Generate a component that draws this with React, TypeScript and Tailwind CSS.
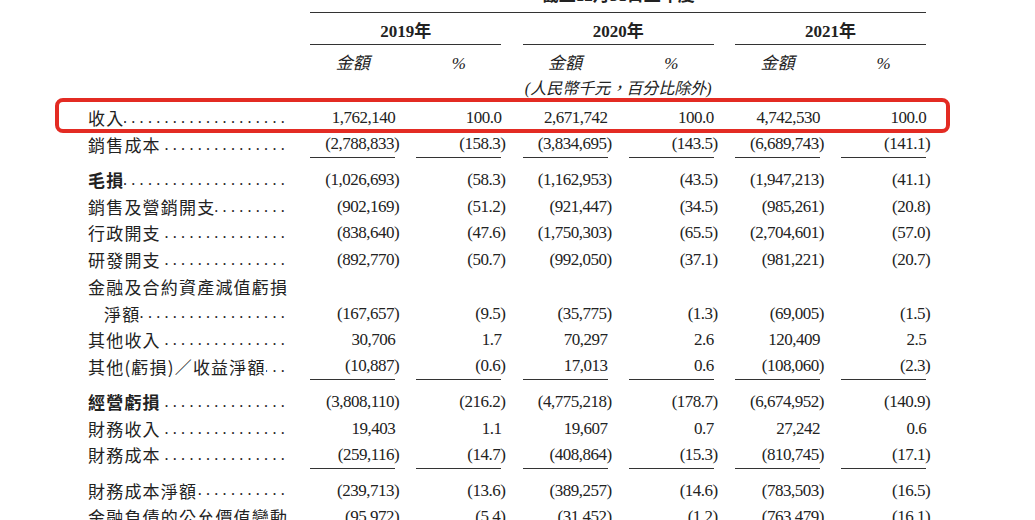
import React from 'react';

type Row = {
  label: string;
  values?: string[];
  bold?: boolean;
  indent?: boolean;
  dots?: boolean;
  rule?: boolean;
};

const rows: Row[] = [
  { label: '收入', values: ['1,762,140', '100.0', '2,671,742', '100.0', '4,742,530', '100.0'], dots: true },
  { label: '銷售成本', values: ['(2,788,833)', '(158.3)', '(3,834,695)', '(143.5)', '(6,689,743)', '(141.1)'], dots: true, rule: true },
  { label: '毛損', values: ['(1,026,693)', '(58.3)', '(1,162,953)', '(43.5)', '(1,947,213)', '(41.1)'], dots: true, bold: true },
  { label: '銷售及營銷開支', values: ['(902,169)', '(51.2)', '(921,447)', '(34.5)', '(985,261)', '(20.8)'], dots: true },
  { label: '行政開支', values: ['(838,640)', '(47.6)', '(1,750,303)', '(65.5)', '(2,704,601)', '(57.0)'], dots: true },
  { label: '研發開支', values: ['(892,770)', '(50.7)', '(992,050)', '(37.1)', '(981,221)', '(20.7)'], dots: true },
  { label: '金融及合約資產減值虧損' },
  { label: '淨額', values: ['(167,657)', '(9.5)', '(35,775)', '(1.3)', '(69,005)', '(1.5)'], dots: true, indent: true },
  { label: '其他收入', values: ['30,706', '1.7', '70,297', '2.6', '120,409', '2.5'], dots: true },
  { label: '其他(虧損)／收益淨額', values: ['(10,887)', '(0.6)', '17,013', '0.6', '(108,060)', '(2.3)'], dots: true, rule: true },
  { label: '經營虧損', values: ['(3,808,110)', '(216.2)', '(4,775,218)', '(178.7)', '(6,674,952)', '(140.9)'], dots: true, bold: true },
  { label: '財務收入', values: ['19,403', '1.1', '19,607', '0.7', '27,242', '0.6'], dots: true },
  { label: '財務成本', values: ['(259,116)', '(14.7)', '(408,864)', '(15.3)', '(810,745)', '(17.1)'], dots: true, rule: true },
  { label: '財務成本淨額', values: ['(239,713)', '(13.6)', '(389,257)', '(14.6)', '(783,503)', '(16.5)'], dots: true },
  { label: '金融負債的公允價值變動', values: ['(95,972)', '(5.4)', '(31,452)', '(1.2)', '(763,479)', '(16.1)'] },
];

const grid = 'grid grid-cols-[201px_85px_85px_85px_85px_85px_85px] gap-x-[21.2px]';
const serif = "font-['Liberation_Serif','Noto_Sans_CJK_TC',serif]";
const cjk = "font-['Noto_Sans_CJK_TC','Liberation_Serif',sans-serif]";

const Cell = ({ v, rule }: { v: string; rule?: boolean }) => {
  const paren = v.endsWith(')');
  return (
    <div className={`h-full flex items-center justify-end ${rule ? 'border-b border-[#333]' : ''}`}>
      <span className={paren ? '-mr-[4px]' : ''}>{v}</span>
    </div>
  );
};

const Label = ({ row }: { row: Row }) => (
  <div className={`flex items-center min-w-0 ${row.indent ? 'pl-[16px]' : ''}`}>
    <span className={`${cjk} shrink-0 whitespace-nowrap text-[17px] tracking-[1.2px] ${row.bold ? 'font-bold' : ''}`}>
      {row.label}
    </span>
    {row.dots && (
      <span className="flex-1 min-w-0 flex justify-end overflow-hidden">
        <span className={`${serif} shrink-0 whitespace-nowrap text-[16px] tracking-[4.3px]`}>{'.'.repeat(22)}</span>
      </span>
    )}
  </div>
);

export default function App() {
  return (
    <div className="relative w-[1035px] h-[520px] overflow-hidden bg-white text-[#222] text-[17px]">
      <div className="pl-[88px]">
        <div className={grid}>
          <div className={`${serif} col-start-2 col-span-6 -mt-[14px] leading-[20px] font-bold text-center`}>
            截至12月31日止年度
          </div>
          <div className="col-start-2 col-span-6 mt-[6px] h-px bg-[#333]" />
        </div>

        <div className={grid}>
          {['2019年', '2020年', '2021年'].map((y, i) => (
            <div
              key={y}
              className={`${serif} ${i === 0 ? 'col-start-2' : i === 1 ? 'col-start-4' : 'col-start-6'} col-span-2 pt-[9px] pb-[2px] leading-[20px] border-b border-[#333] text-center font-bold`}
            >
              {y}
            </div>
          ))}
        </div>

        <div className={`${grid} ${serif} italic`}>
          {['金額', '%', '金額', '%', '金額', '%'].map((h, i) => (
            <div key={i} className={`${i === 0 ? 'col-start-2' : ''} pt-[9px] leading-[20px] text-center`}>
              {h}
            </div>
          ))}
        </div>

        <div className={grid}>
          <div className={`${serif} col-start-2 col-span-6 mt-[5px] leading-[20px] italic text-center text-[16px]`}>
            (人民幣千元，百分比除外)
          </div>
        </div>

        <div className="mt-[5.6px]">
          {rows.map((row) => (
            <div key={row.label} className={`${grid} h-[26.7px] ${row.rule ? 'mb-[8.5px]' : ''}`}>
              <Label row={row} />
              {row.values
                ? row.values.map((v, i) => (
                    <div key={i} className={`${serif} tracking-[-0.5px]`}>
                      <Cell v={v} rule={row.rule} />
                    </div>
                  ))
                : null}
            </div>
          ))}
        </div>
      </div>

      <div className="absolute left-[55px] top-[98px] w-[895px] h-[35px] border-[4px] border-[#e32b23] rounded-[8px]" />
    </div>
  );
}
